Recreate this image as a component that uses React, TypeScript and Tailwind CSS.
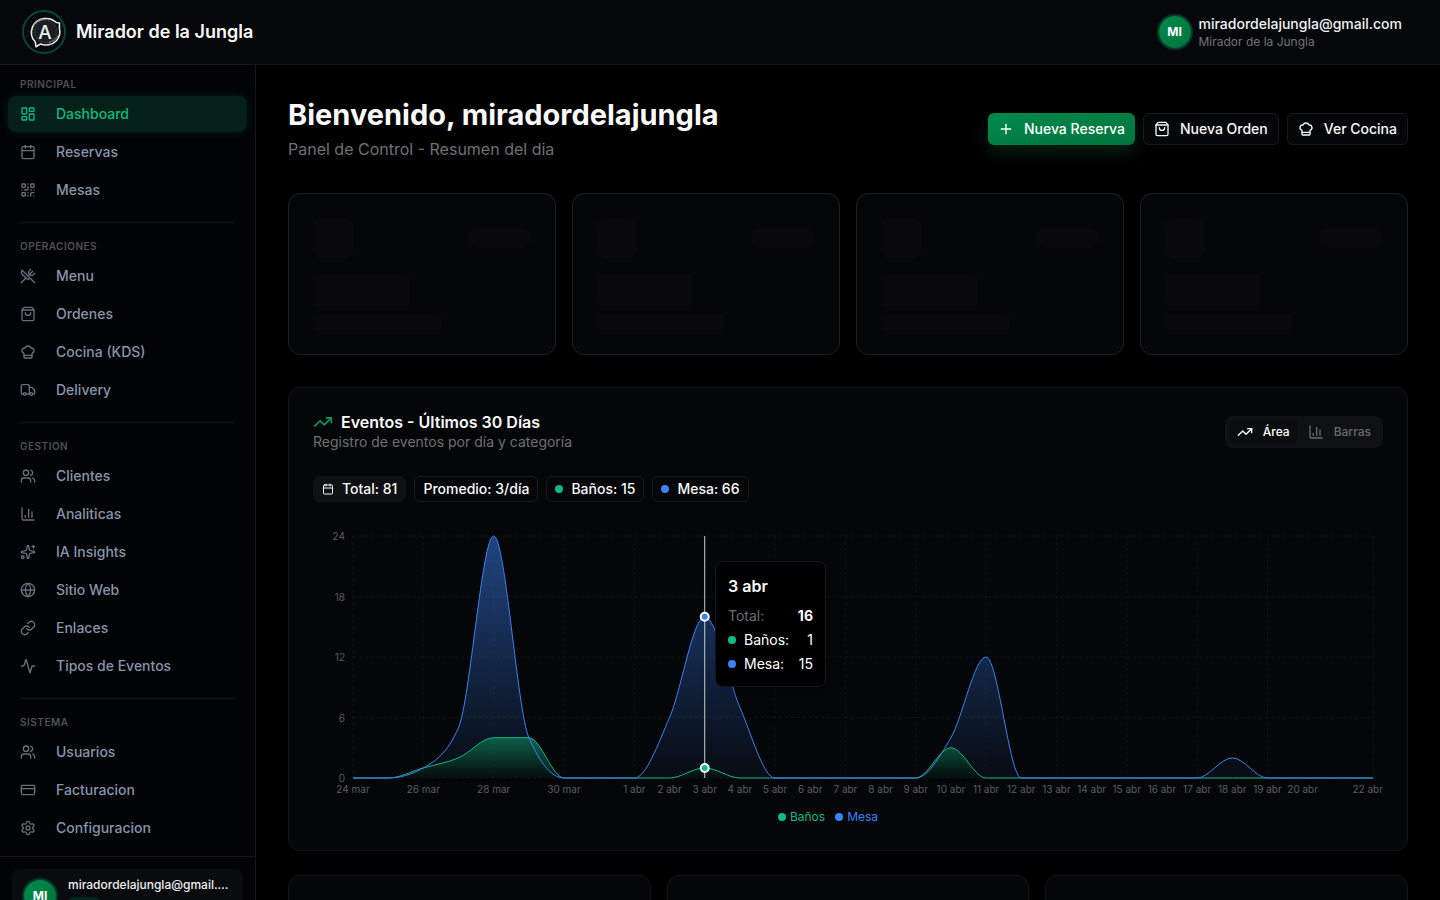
import React, { useEffect, useRef, useState } from 'react';
import {
  Activity,
  Calendar,
  ChartColumn,
  ChefHat,
  CreditCard,
  Globe,
  LayoutDashboard,
  Link,
  Plus,
  QrCode,
  Settings,
  ShoppingBag,
  Sparkles,
  TrendingUp,
  Truck,
  Users,
  UtensilsCrossed,
  type LucideIcon
} from 'lucide-react';

interface NavItem {
  label: string;
  icon: LucideIcon;
  active?: boolean;
}

interface NavSection {
  title: string;
  items: NavItem[];
}

const sections: NavSection[] = [
  {
    title: 'PRINCIPAL',
    items: [
      { label: 'Dashboard', icon: LayoutDashboard, active: true },
      { label: 'Reservas', icon: Calendar },
      { label: 'Mesas', icon: QrCode }
    ]
  },
  {
    title: 'OPERACIONES',
    items: [
      { label: 'Menu', icon: UtensilsCrossed },
      { label: 'Ordenes', icon: ShoppingBag },
      { label: 'Cocina (KDS)', icon: ChefHat },
      { label: 'Delivery', icon: Truck }
    ]
  },
  {
    title: 'GESTION',
    items: [
      { label: 'Clientes', icon: Users },
      { label: 'Analiticas', icon: ChartColumn },
      { label: 'IA Insights', icon: Sparkles },
      { label: 'Sitio Web', icon: Globe },
      { label: 'Enlaces', icon: Link },
      { label: 'Tipos de Eventos', icon: Activity }
    ]
  },
  {
    title: 'SISTEMA',
    items: [
      { label: 'Usuarios', icon: Users },
      { label: 'Facturacion', icon: CreditCard },
      { label: 'Configuracion', icon: Settings }
    ]
  }
];

// One entry per day, from 24 mar to 22 abr
const banos = [0, 0, 1, 2, 4, 4, 0, 0, 0, 0, 1, 0, 0, 0, 0, 0, 0, 3, 0, 0, 0, 0, 0, 0, 0, 0, 0, 0, 0, 0];
const mesa = [0, 0, 0, 3, 20, 0, 0, 0, 0, 6, 15, 7, 0, 0, 0, 0, 0, 1, 12, 0, 0, 0, 0, 0, 0, 2, 0, 0, 0, 0];
const stacked = banos.map((value, i) => value + mesa[i]);
const days = banos.map((_, i) => (i < 8 ? `${24 + i} mar` : `${i - 7} abr`));
const hiddenTicks = [1, 3, 5, 7, 28];
const gridDays = [0, 2, 4, 6, 8, 10, 12, 14, 16, 18, 20, 22, 24, 26, 29];
const yTicks = [0, 6, 12, 18, 24];
const activeDay = 10;

const plot = { left: 40, right: 10, top: 10, bottom: 252 };

type Point = [number, number];

// Cubic segments with monotone tangents, so the curve never overshoots a value
const monotoneSegments = (points: Point[]) => {
  const slopes = points.slice(1).map((p, i) => (p[1] - points[i][1]) / (p[0] - points[i][0]));
  const tangents = points.map((_, i) => {
    if (i === 0 || i === points.length - 1) return 0;
    const a = slopes[i - 1];
    const b = slopes[i];
    if (a * b <= 0) return 0;
    return Math.sign(a) * Math.min(2 * Math.abs(a), 2 * Math.abs(b), Math.abs(a + b) / 2);
  });
  return points
    .slice(1)
    .map((p, i) => {
      const [x0, y0] = points[i];
      const dx = (p[0] - x0) / 3;
      return `C${x0 + dx},${y0 + dx * tangents[i]} ${p[0] - dx},${p[1] - dx * tangents[i + 1]} ${p[0]},${p[1]}`;
    })
    .join('');
};

const linePath = (points: Point[]) => `M${points[0].join(',')}${monotoneSegments(points)}`;

const areaPath = (top: Point[], base: Point[]) => {
  const back = [...base].reverse();
  return `${linePath(top)}L${back[0].join(',')}${monotoneSegments(back)}Z`;
};

const EventsChart: React.FC = () => {
  const ref = useRef<HTMLDivElement>(null);
  const [width, setWidth] = useState(1070);

  useEffect(() => {
    if (!ref.current) return;
    const observer = new ResizeObserver(([entry]) => setWidth(entry.contentRect.width));
    observer.observe(ref.current);
    return () => observer.disconnect();
  }, []);

  const xAt = (i: number) => plot.left + (i * (width - plot.left - plot.right)) / (days.length - 1);
  const yAt = (value: number) => plot.bottom - (value * (plot.bottom - plot.top)) / 24;
  const toPoints = (values: number[]): Point[] => values.map((value, i) => [xAt(i), yAt(value)]);

  const banosPoints = toPoints(banos);
  const mesaPoints = toPoints(stacked);
  const floor = toPoints(days.map(() => 0));

  return (
    <div ref={ref} className="relative mt-6">
      <svg width="100%" height="282" className="block text-[10px]" role="img" aria-label="Eventos por día">
        <defs>
          <linearGradient id="fillBanos" x1="0" y1="0" x2="0" y2="1">
            <stop offset="5%" stopColor="#10b981" stopOpacity="0.48" />
            <stop offset="95%" stopColor="#10b981" stopOpacity="0.06" />
          </linearGradient>
          <linearGradient id="fillMesa" x1="0" y1="0" x2="0" y2="1">
            <stop offset="5%" stopColor="#3b82f6" stopOpacity="0.48" />
            <stop offset="95%" stopColor="#3b82f6" stopOpacity="0.06" />
          </linearGradient>
        </defs>
        <g stroke="#101214" strokeDasharray="3 3">
          {yTicks.map((tick) => (
            <line key={tick} x1={plot.left} x2={width - plot.right} y1={yAt(tick)} y2={yAt(tick)} />
          ))}
          {gridDays.map((i) => (
            <line key={i} x1={xAt(i)} x2={xAt(i)} y1={plot.top} y2={plot.bottom} />
          ))}
        </g>
        <path d={areaPath(banosPoints, floor)} fill="url(#fillBanos)" />
        <path d={linePath(banosPoints)} fill="none" stroke="#10b981" />
        <path d={areaPath(mesaPoints, banosPoints)} fill="url(#fillMesa)" />
        <path d={linePath(mesaPoints)} fill="none" stroke="#3b82f6" />
        <g fill="#5c5d60">
          {yTicks.map((tick) => (
            <text key={tick} x={plot.left - 8} y={yAt(tick) + 4} textAnchor="end">
              {tick}
            </text>
          ))}
          {days.map((day, i) =>
            hiddenTicks.includes(i) ? null : (
              <text
                key={day}
                x={i === days.length - 1 ? width : xAt(i)}
                y={plot.bottom + 15}
                textAnchor={i === days.length - 1 ? 'end' : 'middle'}
              >
                {day}
              </text>
            )
          )}
        </g>
        <line x1={xAt(activeDay)} x2={xAt(activeDay)} y1={plot.top} y2={plot.bottom} stroke="#ccc" />
        <circle cx={xAt(activeDay)} cy={yAt(banos[activeDay])} r="4" fill="#10b981" stroke="#fff" strokeWidth="2" />
        <circle cx={xAt(activeDay)} cy={yAt(stacked[activeDay])} r="4" fill="#3b82f6" stroke="#fff" strokeWidth="2" />
      </svg>
      <div className="flex h-[18px] items-center justify-center gap-[10px] pr-10 text-xs">
        <span className="flex items-center gap-1 text-[#10b981]">
          <span className="size-2 rounded-full bg-[#10b981]" />
          Baños
        </span>
        <span className="flex items-center gap-1 text-[#3b82f6]">
          <span className="size-2 rounded-full bg-[#3b82f6]" />
          Mesa
        </span>
      </div>
      <div
        className="absolute top-[35px] w-[111px] rounded-lg border border-[#15171a] bg-black p-3 text-sm shadow-xl"
        style={{ left: Math.round(xAt(activeDay)) + 10 }}
      >
        <p className="mb-2 text-base leading-6 font-semibold text-white">{days[activeDay]}</p>
        <div className="flex h-5 items-center justify-between">
          <span className="text-[#6b6c70]">Total:</span>
          <span className="font-bold text-white">{stacked[activeDay]}</span>
        </div>
        <div className="mt-1 flex h-5 items-center justify-between text-white">
          <span className="flex items-center gap-2">
            <span className="size-2 rounded-full bg-[#10b981]" />
            Baños:
          </span>
          <span>{banos[activeDay]}</span>
        </div>
        <div className="mt-1 flex h-5 items-center justify-between text-white">
          <span className="flex items-center gap-2">
            <span className="size-2 rounded-full bg-[#3b82f6]" />
            Mesa:
          </span>
          <span>{mesa[activeDay]}</span>
        </div>
      </div>
    </div>
  );
};

const Logo: React.FC = () => (
  <svg viewBox="0 0 44 44" className="size-11 shrink-0" role="img" aria-label="Logo">
    <circle cx="22" cy="22" r="21" fill="#060809" stroke="#064735" strokeWidth="2" />
    <circle cx="23.5" cy="21.5" r="12.5" fill="#1b1c20" />
    <circle cx="23.5" cy="21.5" r="11" fill="none" stroke="#3e3f45" strokeWidth="2" strokeDasharray="1 2" />
    <g fill="#55585b">
      <circle cx="9" cy="12" r="0.5" />
      <circle cx="13" cy="8" r="0.5" />
      <circle cx="35" cy="7" r="0.5" />
      <circle cx="6" cy="21" r="0.5" />
      <circle cx="5" cy="26" r="0.5" />
      <circle cx="39" cy="17" r="0.5" />
      <circle cx="31" cy="36" r="0.5" />
    </g>
    <path
      d="M13.2 31.8l.8 4.9 4.2-2.6c5.600 1.900 12.300.9 16.200-3.300 3.200-3.600 3.900-8.500 3-12.600l.1-5.200-3.200-.5C31.300 9.500 26.500 8.100 22 8.600c-5 .7-9.400 3.600-11.400 8-2.100 5.500-1.100 11.500 2.600 15.200z"
      fill="none"
      stroke="#e6e7e8"
      strokeWidth="1.6"
      strokeLinejoin="round"
    />
    <path d="M11.5 15.500c2-4 6-6.200 11-6.100M36 25.500c-1.700 3.500-5 6.200-9.500 6.900" fill="none" stroke="#8b8c8f" strokeWidth="1" />
    <text x="23" y="28.5" textAnchor="middle" fontSize="19" fontWeight="500" fill="#e8edf0">
      A
    </text>
  </svg>
);

const Avatar: React.FC = () => (
  <span className="flex size-8 shrink-0 items-center justify-center rounded-full bg-gradient-to-br from-[#008a4b] to-[#00733d] text-xs font-bold text-white ring-2 ring-[#053a2b]">
    MI
  </span>
);

const Header: React.FC = () => (
  <header className="sticky top-0 z-10 flex h-[65px] items-center justify-between border-b border-[#161819] bg-[#050708] pr-[38px] pl-[22px]">
    <div className="flex items-center gap-[10px]">
      <Logo />
      <span className="text-lg font-semibold text-[#fafafa]">Mirador de la Jungla</span>
    </div>
    <button type="button" className="flex items-center gap-2 text-left">
      <Avatar />
      <span className="pt-[2px]">
        <span className="block text-sm leading-[18px] font-medium text-[#f1f3f4]">miradordelajungla@gmail.com</span>
        <span className="block text-xs leading-[18px] text-[#737477]">Mirador de la Jungla</span>
      </span>
    </button>
  </header>
);

const Sidebar: React.FC = () => (
  <aside className="w-64 shrink-0 border-r border-[#121416] bg-[#020304]">
    <nav className="pt-2 pb-[10px]">
      {sections.map((section, index) => (
        <section key={section.title}>
          {index > 0 && <hr className="mx-5 mt-[14px] mb-3 border-[#121416]" />}
          <h2 className="flex h-[23px] items-center px-5 text-[10px] font-semibold tracking-wider text-[#505154]">
            {section.title}
          </h2>
          <ul className="flex flex-col gap-[2px] px-2">
            {section.items.map(({ label, icon: Icon, active }) => (
              <li key={label}>
                <a
                  href="#"
                  className={
                    active
                      ? 'flex h-9 items-center gap-5 rounded-lg bg-[#042019] px-3 text-sm font-medium text-[#10b981] shadow-[0_0_10px_rgba(16,185,129,0.15)]'
                      : 'flex h-9 items-center gap-5 rounded-lg px-3 text-sm font-medium text-[#8795ab]'
                  }
                >
                  <Icon size={16} className={active ? '' : 'opacity-75'} />
                  {label}
                </a>
              </li>
            ))}
          </ul>
        </section>
      ))}
    </nav>
    <div className="border-t border-[#121416] p-3">
      <div className="flex items-center gap-3 rounded-lg bg-[#0a0b0d] px-3 py-[6px]">
        <Avatar />
        <div className="min-w-0 flex-1">
          <p className="truncate text-xs leading-5 font-medium text-[#eef0f1]">miradordelajungla@gmail.com</p>
          <span className="mt-[2px] block h-5 w-8 rounded-md bg-[#05261d]" />
        </div>
      </div>
    </div>
  </aside>
);

const SkeletonCard: React.FC = () => (
  <div className="rounded-xl border border-[#1d1f21] bg-[#050608] p-6">
    <div className="flex items-center justify-between">
      <div className="size-10 rounded-lg bg-[#09090b]" />
      <div className="h-5 w-16 rounded-full bg-[#09090b]" />
    </div>
    <div className="mt-4 h-8 w-24 rounded bg-[#09090b]" />
    <div className="mt-2 h-4 w-32 rounded bg-[#09090b]" />
  </div>
);

const App: React.FC = () => {
  return (
    <div className="min-h-screen bg-black font-['Inter',sans-serif] text-[#fafafa]">
      <Header />
      <div className="flex">
        <Sidebar />
        <main className="min-w-0 flex-1 px-8 pt-8">
          <div className="flex items-center justify-between">
            <div>
              <h1 className="text-[29px] leading-9 font-bold">Bienvenido, miradordelajungla</h1>
              <p className="mt-1 text-base text-[#6f7073]">Panel de Control - Resumen del dia</p>
            </div>
            <div className="flex gap-2 text-sm font-medium">
              <button
                type="button"
                className="flex h-8 items-center gap-[10px] rounded-md bg-gradient-to-br from-[#008a4b] to-[#00733d] px-[10px] text-white shadow-[0_8px_16px_rgba(16,185,129,0.16)]"
              >
                <Plus size={16} />
                Nueva Reserva
              </button>
              <button
                type="button"
                className="flex h-8 items-center gap-[10px] rounded-md border border-[#17191b] bg-[#050608] px-[10px]"
              >
                <ShoppingBag size={16} />
                Nueva Orden
              </button>
              <button
                type="button"
                className="flex h-8 items-center gap-[10px] rounded-md border border-[#17191b] bg-[#050608] px-[10px]"
              >
                <ChefHat size={16} />
                Ver Cocina
              </button>
            </div>
          </div>

          <div className="mt-8 grid grid-cols-4 gap-4">
            <SkeletonCard />
            <SkeletonCard />
            <SkeletonCard />
            <SkeletonCard />
          </div>

          <section className="mt-8 rounded-xl border border-[#121416] bg-[#050608] p-6">
            <div className="flex items-center justify-between">
              <div>
                <h2 className="flex h-5 items-center gap-2 text-base font-semibold">
                  <TrendingUp size={20} className="text-[#0d9568]" />
                  Eventos - Últimos 30 Días
                </h2>
                <p className="text-sm text-[#6f7073]">Registro de eventos por día y categoría</p>
              </div>
              <div className="flex h-8 items-center gap-[2px] rounded-lg bg-[#0f1012] px-1 text-xs font-medium">
                <button
                  type="button"
                  className="flex h-6 items-center gap-[10px] rounded-md bg-[#0c0d0f] px-2 text-white"
                >
                  <TrendingUp size={16} />
                  Área
                </button>
                <button type="button" className="flex h-6 items-center gap-[10px] rounded-md px-2 text-[#6a6b6e]">
                  <ChartColumn size={16} />
                  Barras
                </button>
              </div>
            </div>

            <div className="mt-6 flex gap-2 text-sm font-medium">
              <span className="flex h-[26px] items-center gap-2 rounded-md border border-[#0f1012] bg-[#0f1012] px-2">
                <Calendar size={12} />
                Total: 81
              </span>
              <span className="flex h-[26px] items-center rounded-md border border-[#17191b] px-2">Promedio: 3/día</span>
              <span className="flex h-[26px] items-center gap-2 rounded-md border border-[#17191b] px-2">
                <span className="size-2 rounded-full bg-[#10b981]" />
                Baños: 15
              </span>
              <span className="flex h-[26px] items-center gap-2 rounded-md border border-[#17191b] px-2">
                <span className="size-2 rounded-full bg-[#3b82f6]" />
                Mesa: 66
              </span>
            </div>

            <EventsChart />
          </section>

          <div className="mt-6 grid grid-cols-3 gap-4">
            <div className="h-48 rounded-xl border border-[#121416] bg-[#050608]" />
            <div className="h-48 rounded-xl border border-[#121416] bg-[#050608]" />
            <div className="h-48 rounded-xl border border-[#121416] bg-[#050608]" />
          </div>
        </main>
      </div>
    </div>
  );
};

export default App;
